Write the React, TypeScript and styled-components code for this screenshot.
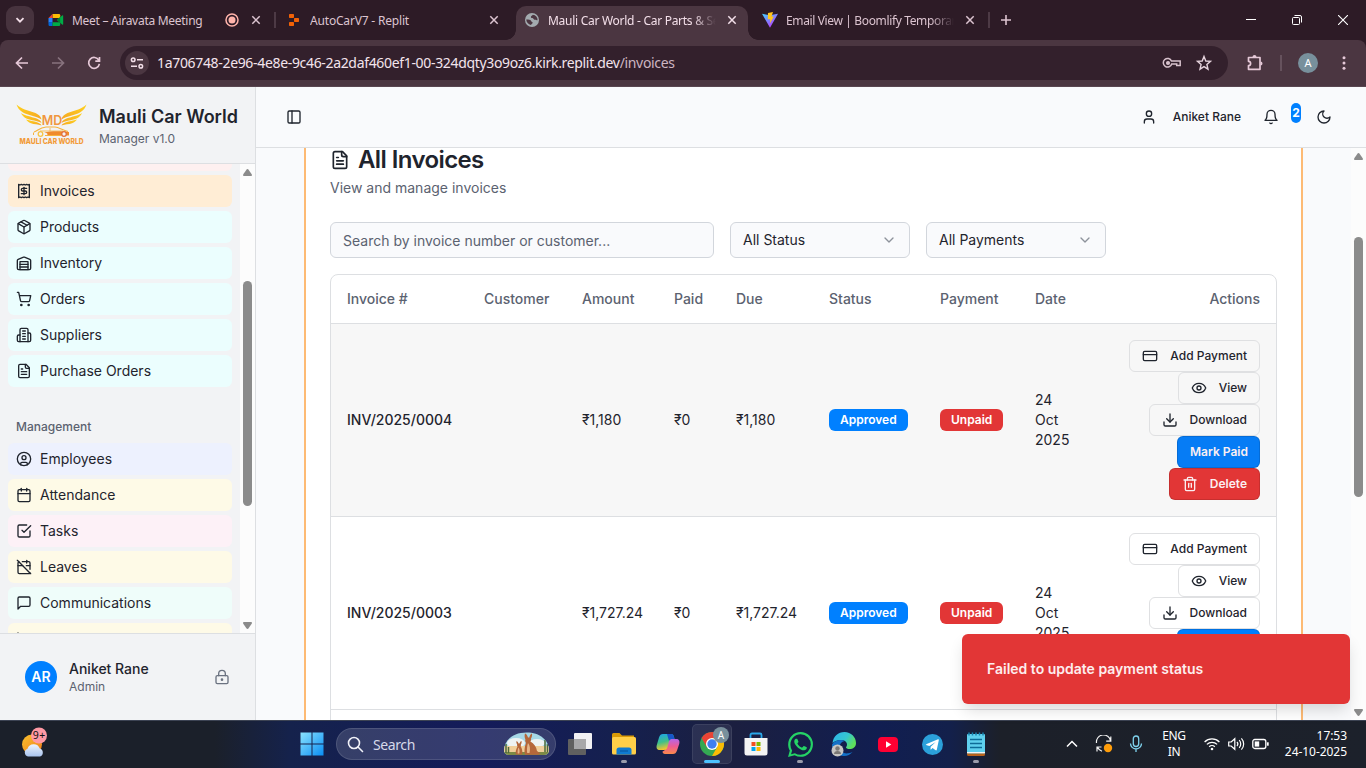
import React from "react";
import styled, { createGlobalStyle, css } from "styled-components";

const ink = "#1f242d";
const muted = "#5b6270";
const line = "#dddfe2";
const blue = "#0080ff";
const red = "#e23636";
const ui = `"Noto Sans", "Open Sans", sans-serif`;

const Global = createGlobalStyle`
  * { box-sizing: border-box; }
  html, body { margin: 0; padding: 0; overflow: hidden; }
  body { font-family: Inter, "Liberation Sans", sans-serif; color: ${ink}; font-size: 14px; }
  svg { display: block; flex: none; }
`;

/* ---------- icons ---------- */
const paths: Record<string, React.ReactNode> = {
  receipt: (<><path d="M4 2v20l2-1 2 1 2-1 2 1 2-1 2 1 2-1 2 1V2l-2 1-2-1-2 1-2-1-2 1-2-1-2 1Z" /><path d="M16 8h-6a2 2 0 1 0 0 4h4a2 2 0 1 1 0 4H8" /><path d="M12 17.5v-11" /></>),
  package: (<><path d="m7.5 4.27 9 5.15" /><path d="M21 8a2 2 0 0 0-1-1.73l-7-4a2 2 0 0 0-2 0l-7 4A2 2 0 0 0 3 8v8a2 2 0 0 0 1 1.73l7 4a2 2 0 0 0 2 0l7-4A2 2 0 0 0 21 16Z" /><path d="m3.3 7 8.7 5 8.7-5" /><path d="M12 22V12" /></>),
  warehouse: (<><path d="M22 8.35V20a2 2 0 0 1-2 2H4a2 2 0 0 1-2-2V8.35A2 2 0 0 1 3.26 6.5l8-3.2a2 2 0 0 1 1.48 0l8 3.2A2 2 0 0 1 22 8.35Z" /><path d="M6 18h12" /><path d="M6 14h12" /><rect width="12" height="12" x="6" y="10" /></>),
  cart: (<><circle cx="8" cy="21" r="1" /><circle cx="19" cy="21" r="1" /><path d="M2.05 2.05h2l2.66 12.42a2 2 0 0 0 2 1.58h9.78a2 2 0 0 0 1.95-1.57l1.65-7.43H5.12" /></>),
  building: (<><path d="M6 22V4a2 2 0 0 1 2-2h8a2 2 0 0 1 2 2v18Z" /><path d="M6 12H4a2 2 0 0 0-2 2v6a2 2 0 0 0 2 2h2" /><path d="M18 9h2a2 2 0 0 1 2 2v9a2 2 0 0 1-2 2h-2" /><path d="M10 6h4" /><path d="M10 10h4" /><path d="M10 14h4" /><path d="M10 18h4" /></>),
  file: (<><path d="M15 2H6a2 2 0 0 0-2 2v16a2 2 0 0 0 2 2h12a2 2 0 0 0 2-2V7Z" /><path d="M14 2v4a2 2 0 0 0 2 2h4" /><path d="M10 9H8" /><path d="M16 13H8" /><path d="M16 17H8" /></>),
  userCircle: (<><circle cx="12" cy="12" r="10" /><circle cx="12" cy="10" r="3" /><path d="M7 20.662V19a2 2 0 0 1 2-2h6a2 2 0 0 1 2 2v1.662" /></>),
  calendar: (<><path d="M8 2v4" /><path d="M16 2v4" /><rect width="18" height="18" x="3" y="4" rx="2" /><path d="M3 10h18" /></>),
  check: (<><path d="m9 11 3 3L22 4" /><path d="M21 12v7a2 2 0 0 1-2 2H5a2 2 0 0 1-2-2V5a2 2 0 0 1 2-2h11" /></>),
  calendarOff: (<><path d="M4.2 4.2A2 2 0 0 0 3 6v14a2 2 0 0 0 2 2h14a2 2 0 0 0 1.82-1.18" /><path d="M21 15.5V6a2 2 0 0 0-2-2H9.5" /><path d="M16 2v4" /><path d="M3 10h7" /><path d="M21 10h-5.5" /><path d="m2 2 20 20" /></>),
  message: <path d="M21 15a2 2 0 0 1-2 2H7l-4 4V5a2 2 0 0 1 2-2h14a2 2 0 0 1 2 2z" />,
  chart: (<><path d="M3 3v18h18" /><path d="M18 17V9" /><path d="M13 17V5" /><path d="M8 17v-3" /></>),
  lock: (<><circle cx="12" cy="16" r="1" /><rect x="3" y="10" width="18" height="12" rx="2" /><path d="M7 10V7a5 5 0 0 1 10 0v3" /></>),
  panel: (<><rect width="18" height="18" x="3" y="3" rx="2" /><path d="M9 3v18" /></>),
  user: (<><path d="M19 21v-2a4 4 0 0 0-4-4H9a4 4 0 0 0-4 4v2" /><circle cx="12" cy="7" r="4" /></>),
  bell: (<><path d="M6 8a6 6 0 0 1 12 0c0 7 3 9 3 9H3s3-2 3-9" /><path d="M10.3 21a1.94 1.94 0 0 0 3.4 0" /></>),
  moon: <path d="M12 3a6 6 0 0 0 9 9 9 9 0 1 1-9-9Z" />,
  chevron: <path d="m6 9 6 6 6-6" />,
  card: (<><rect width="20" height="14" x="2" y="5" rx="2" /><path d="M2 10h20" /></>),
  eye: (<><path d="M2.062 12.348a1 1 0 0 1 0-.696 10.75 10.75 0 0 1 19.876 0 1 1 0 0 1 0 .696 10.75 10.75 0 0 1-19.876 0" /><circle cx="12" cy="12" r="3" /></>),
  download: (<><path d="M21 15v4a2 2 0 0 1-2 2H5a2 2 0 0 1-2-2v-4" /><path d="m7 10 5 5 5-5" /><path d="M12 15V3" /></>),
  trash: (<><path d="M3 6h18" /><path d="M19 6v14c0 1-1 2-2 2H7c-1 0-2-1-2-2V6" /><path d="M8 6V4c0-1 1-2 2-2h4c1 0 2 1 2 2v2" /><path d="M10 11v6" /><path d="M14 11v6" /></>),
};

const Icon = ({ name, size = 16, color = "currentColor" }: { name: string; size?: number; color?: string }) => (
  <svg width={size} height={size} viewBox="0 0 24 24" fill="none" stroke={color} strokeWidth="2" strokeLinecap="round" strokeLinejoin="round">
    {paths[name]}
  </svg>
);

/* ---------- browser window ---------- */
const Screen = styled.div`
  width: 1366px; height: 768px; display: flex; flex-direction: column; overflow: hidden; background: #2d1b26;
`;
const TabStrip = styled.div`
  height: 40px; flex: none; display: flex; padding: 6px 0 0 6px; background: #2d1b26; font-family: ${ui};
`;
const TabSearch = styled.div`
  width: 28px; height: 28px; border-radius: 9px; background: #47333e; margin-right: 6px;
  display: flex; align-items: center; justify-content: center;
`;
const Tab = styled.div<{ $active?: boolean }>`
  position: relative; width: 232px; height: 34px; padding: 0 8px 6px; display: flex; align-items: center; gap: 8px;
  ${(p) => p.$active && css`
    background: #4b3641; border-radius: 10px 10px 0 0;
    &::before, &::after {
      content: ""; position: absolute; bottom: 0; width: 10px; height: 10px;
    }
    &::before { left: -10px; background: radial-gradient(circle at 0 0, transparent 9.5px, #4b3641 10px); }
    &::after { right: -10px; background: radial-gradient(circle at 100% 0, transparent 9.5px, #4b3641 10px); }
  `}
`;
const TabTitle = styled.span<{ $fade?: boolean; $active?: boolean; $track?: number }>`
  flex: 1; min-width: 0; overflow: hidden; white-space: nowrap; font-size: 12px; line-height: 18px; padding-top: 1px;
  letter-spacing: ${(p) => p.$track ?? -0.15}px;
  color: ${(p) => (p.$active ? "#f3dfe9" : "#dcc4d0")};
  ${(p) => p.$fade && css`mask-image: linear-gradient(90deg, #000 86%, transparent 100%);`}
`;
const TabGap = styled.div<{ $bar?: boolean }>`
  width: 6px; height: 28px; display: flex; align-items: center; justify-content: center;
  &::after { content: ""; width: 2px; height: 16px; background: ${(p) => (p.$bar ? "#4d3a45" : "transparent")}; }
`;
const CloseX = ({ c = "#dcc4d0" }: { c?: string }) => (
  <svg width="16" height="16" viewBox="0 0 16 16" stroke={c} strokeWidth="1.5" fill="none"><path d="M4.3 4.3l7.4 7.4M11.7 4.3l-7.4 7.4" /></svg>
);
const NewTab = styled.div`width: 28px; height: 28px; display: flex; align-items: center; justify-content: center;`;
const WindowControls = styled.div`margin-left: auto; display: flex; height: 28px; align-items: center;`;
const WinBtn = styled.div`width: 46px; display: flex; justify-content: center;`;

const ToolbarWrap = styled.div`
  height: 47px; flex: none; display: flex; align-items: center; background: #4b3641; border-radius: 8px 8px 0 0;
  font-family: ${ui}; border-bottom: 1px solid #594650;
`;
const NavBtn = styled.div`width: 36px; display: flex; justify-content: center;`;
const NavGroup = styled.div`display: flex; padding-left: 4px; width: 120px;`;
const AddressBar = styled.div`
  width: 1108px; height: 34px; border-radius: 17px; background: #33202c; display: flex; align-items: center; padding: 0 14px 0 5px;
`;
const SiteInfo = styled.div`
  width: 24px; height: 24px; border-radius: 50%; background: #4b3641; display: flex; align-items: center; justify-content: center; margin-right: 8px;
`;
const Url = styled.div`
  font-size: 14px; line-height: 20px; color: #f3e4ec; letter-spacing: -0.33px; flex: 1; white-space: nowrap;
  span { color: #cdb6c2; }
`;
const BarIcons = styled.div`display: flex; gap: 12px; align-items: center;`;
const ToolRight = styled.div`flex: 1; display: flex; align-items: center; padding-left: 17px;`;
const ToolSep = styled.div`width: 2px; height: 16px; background: #66525d; margin: 0 16px 0 15px;`;
const ChromeAvatar = styled.div`
  width: 20px; height: 20px; border-radius: 50%; background: #78909c; color: #fff; font-size: 11px; line-height: 20px; text-align: center; margin-right: 18px;
`;

/* ---------- app shell ---------- */
const Page = styled.div`height: 633px; flex: none; display: flex; background: #f9fafc;`;
const Sidebar = styled.aside`
  width: 256px; flex: none; background: #f2f3f5; border-right: 1px solid ${line}; display: flex; flex-direction: column;
`;
const Brand = styled.div`
  height: 77px; flex: none; border-bottom: 1px solid ${line}; display: flex; align-items: center; padding: 0 16px; gap: 11px;
`;
const BrandName = styled.div`font-size: 18px; line-height: 24px; font-weight: 600; white-space: nowrap; margin-top: 1px;`;
const BrandSub = styled.div`font-size: 12px; line-height: 16px; color: ${muted}; margin-top: 2px;`;
const NavArea = styled.div`height: 469px; flex: none; display: flex; overflow: hidden;`;
const NavList = styled.nav`width: 240px; height: 469px; overflow: hidden; padding: 0 8px; display: flex; flex-direction: column; gap: 4px;`;
const NavItem = styled.div<{ $bg: string }>`
  height: 32px; flex: none; border-radius: 6px; background: ${(p) => p.$bg}; display: flex; align-items: center; gap: 8px; padding: 0 8px;
  font-size: 14px; line-height: 20px;
`;
const NavTail = styled.div<{ $bg: string }>`height: 7px; flex: none; border-radius: 0 0 6px 6px; background: ${(p) => p.$bg};`;
const GroupLabel = styled.div`
  height: 32px; flex: none; margin: 20px 0 -4px; padding: 0 8px; line-height: 32px; font-size: 12px; font-weight: 500; color: ${muted};
`;
const Profile = styled.div`
  flex: 1; border-top: 1px solid ${line}; display: flex; align-items: center; padding: 0 25px; gap: 12px;
`;
const Initials = styled.div`
  width: 32px; height: 32px; border-radius: 50%; background: ${blue}; color: #fff; font-weight: 600; font-size: 14px; line-height: 32px; text-align: center;
`;
const ProfileText = styled.div`flex: 1;`;
const ProfileName = styled.div`font-size: 14px; line-height: 20px; font-weight: 500;`;
const ProfileRole = styled.div`font-size: 12px; line-height: 16px; color: ${muted};`;

const ScrollTrack = styled.div<{ $w: number }>`
  width: ${(p) => p.$w}px; flex: none; background: #fcfcfc; display: flex; flex-direction: column; align-items: center; padding: 5px 0 4px;
`;
const Thumb = styled.div<{ $top: number; $h: number }>`
  width: 9px; height: ${(p) => p.$h}px; border-radius: 5px; background: #8b8b8b; margin-top: ${(p) => p.$top}px;
`;
const ArrowSvg = styled.svg<{ $down?: boolean }>`
  ${(p) => p.$down && css`margin-top: auto; transform: rotate(180deg);`}
`;
const Arrow = ({ down }: { down?: boolean }) => (
  <ArrowSvg $down={down} width="9" height="7" viewBox="0 0 9 7" fill="#8b8b8b">
    <path d="M4.5 0C5 0 5.3 .3 5.6 .7L8.7 5.2C9.2 6 8.9 7 8 7H1C.1 7-.2 6 .3 5.2L3.4 .7C3.7 .3 4 0 4.5 0Z" />
  </ArrowSvg>
);

const Main = styled.main`flex: 1; display: flex; flex-direction: column; min-width: 0;`;
const TopBar = styled.header`
  height: 61px; flex: none; border-bottom: 1px solid ${line}; display: flex; align-items: center; padding: 0 34px 0 30px;
`;
const TopUser = styled.div`
  margin-left: auto; display: flex; align-items: center; gap: 16px; font-size: 12px; line-height: 16px; font-weight: 500; margin-right: 22px;
`;
const Count = styled.div`
  width: 10px; height: 20px; border-radius: 5px; background: ${blue}; color: #fff; font-size: 12px; font-weight: 700; line-height: 19px; margin: -8px 15px 0 12px;
  display: flex; justify-content: center;
`;
const Body = styled.div`flex: 1; display: flex; min-height: 0; overflow: hidden;`;
const Scroller = styled.div`flex: 1; padding: 0 48px; overflow: hidden;`;
const Card = styled.section`
  height: 100%; overflow: hidden; background: #fff; border: solid #fdba74; border-width: 0 2px; padding: 0 24px; display: flex; flex-direction: column;
`;
const Title = styled.h1`
  margin: 0; height: 24px; display: flex; align-items: center; gap: 8px; font-size: 24px; line-height: 24px; font-weight: 600; letter-spacing: -0.6px;
`;
const Subtitle = styled.p`margin: 6px 0 24px; font-size: 14px; line-height: 20px; color: ${muted};`;
const Filters = styled.div`display: flex; gap: 16px; margin-bottom: 16px;`;
const Field = styled.div<{ $w: number; $hint?: boolean }>`
  width: ${(p) => p.$w}px; height: 36px; border: 1px solid #d2d6dc; border-radius: 6px; background: #f9fafc; display: flex; align-items: center; justify-content: space-between;
  padding: ${(p) => (p.$hint ? "2px 12px 0" : "0 12px")}; font-size: 14px; line-height: 20px; color: ${(p) => (p.$hint ? muted : ink)};
`;
const Table = styled.div`border: 1px solid ${line}; border-radius: 8px; flex: none;`;
const Row = styled.div<{ $h: number; $bg?: string; $head?: boolean }>`
  display: grid; grid-template-columns: 137px 98px 92px 62px 93px 111px 95px 76px 181px; height: ${(p) => p.$h}px; align-items: center;
  background: ${(p) => p.$bg ?? "transparent"}; border-bottom: 1px solid ${line};
  ${(p) => p.$head && css`color: ${muted}; font-weight: 500;`}
`;
const Cell = styled.div<{ $right?: boolean; $strong?: boolean; $narrow?: boolean }>`
  padding: 0 ${(p) => (p.$narrow ? 24 : 16)}px 0 16px; line-height: 20px; font-size: 14px; text-align: ${(p) => (p.$right ? "right" : "left")};
  ${(p) => p.$strong && css`font-weight: 500;`}
`;
const Pill = styled.span<{ $bg: string }>`
  display: block; width: max-content; height: 22px; line-height: 22px; border-radius: 6px; padding: 0 11px; background: ${(p) => p.$bg}; color: #fff; font-size: 12px; font-weight: 600;
`;
const Actions = styled.div`display: flex; flex-direction: column; align-items: flex-end; padding-right: 16px;`;
const ActionBtn = styled.button<{ $w: number; $tone?: string }>`
  width: ${(p) => p.$w}px; height: 32px; border-radius: 6px; border: 1px solid ${(p) => (p.$tone ? "rgba(0,0,0,.12)" : "#dfe0e2")};
  background: ${(p) => p.$tone ?? "transparent"}; color: ${(p) => (p.$tone ? "#fbeff2" : ink)}; white-space: nowrap; line-height: 16px;
  font-family: inherit; font-size: 12px; font-weight: ${(p) => (p.$tone ? 600 : 500)}; display: flex; align-items: center; justify-content: space-between; padding: 0 12px;
`;
const Toast = styled.div`
  position: absolute; left: 962px; top: 634px; width: 388px; height: 70px; border-radius: 6px; background: ${red}; color: #fdeeee;
  font-size: 14px; font-weight: 600; line-height: 70px; padding-left: 25px; box-shadow: 0 8px 16px -3px rgba(0, 0, 0, 0.16);
`;

/* ---------- taskbar ---------- */
const Taskbar = styled.footer`
  height: 48px; flex: none; display: flex; align-items: center; box-shadow: inset 0 1px 0 #3c4353; font-family: ${ui}; color: #fff;
  background: linear-gradient(90deg, #1b202a 0, #1b202a 215px, #15224c 290px, #141b5a 480px, #15204e 620px, #1b1f40 735px, #111e51 880px, #13204b 950px, #1c2029 1000px, #1c212b 1366px);
`;
const WeatherSlot = styled.div`width: 290px; padding-left: 20px; padding-bottom: 2px;`;
const Slot = styled.div<{ $hot?: boolean }>`
  width: ${(p) => (p.$hot ? 40 : 44)}px; margin: 0 ${(p) => (p.$hot ? 2 : 0)}px; height: 40px; display: flex; align-items: center; justify-content: center; position: relative;
  ${(p) => p.$hot && css`background: rgba(255,255,255,.08); border: 1px solid rgba(255,255,255,.08); border-radius: 5px;`}
`;
const StartSlot = styled(Slot)`padding-right: 1px;`;
const Mark = styled.div<{ $on?: boolean }>`
  position: absolute; bottom: ${(p) => (p.$on ? 0 : 1)}px; left: 50%; width: ${(p) => (p.$on ? 16 : 6)}px; height: 3px; border-radius: 2px; transform: translateX(-50%);
  background: ${(p) => (p.$on ? "#4cc2ff" : "#9a9cab")};
`;
const SearchBox = styled.div`
  width: 220px; height: 32px; border-radius: 16px; border: 1px solid rgba(255,255,255,.12); background: rgba(255,255,255,.14); margin: 0 2px; display: flex; align-items: center; padding: 0 5px 0 10px;
  font-size: 14px; color: #d6d9ea; gap: 9px; letter-spacing: -0.4px;
  span { flex: 1; }
`;
const Tray = styled.div`margin-left: auto; display: flex; align-items: center; padding-right: 19px; font-size: 12px; line-height: 16px;`;
const TrayIcon = styled.div<{ $w: number }>`width: ${(p) => p.$w}px; display: flex; justify-content: center;`;
const Lang = styled.div`width: 44px; text-align: center; letter-spacing: -0.3px;`;
const Clock = styled.div`width: 71px; text-align: right; letter-spacing: -0.05px; white-space: nowrap;`;

const LogoSvg = styled.svg`overflow: visible;`;
const BrandLogo = () => (
  <LogoSvg width="72" height="42" viewBox="0 0 72 42">
    <defs>
      <linearGradient id="wing" x1="0" y1="0" x2="1" y2="1"><stop offset="0" stopColor="#ffd21f" /><stop offset="1" stopColor="#f5a623" /></linearGradient>
    </defs>
    {[undefined, "translate(71 0) scale(-1 1)"].map((t, i) => (
      <g key={i} transform={t} fill="url(#wing)">
        <path d="M.5 .5C5 5 12 6.5 18 8.5C22 10 25 12 25.5 15.5C20 12 12 11 7 8.5C3.5 6.5 1.5 3.5 .5 .5Z" />
        <path d="M5 9C9 12 15 12.5 20 14.3C23 15.5 25 17 25.5 19C21 16.5 15 16.5 11 14.8C8 13.5 6 11.5 5 9Z" />
        <path d="M10 15.6C14 17 18 17 21 18.2C23.5 19.2 25 20 25.5 21.6C22 20.3 18 20.4 15 19.3C12.5 18.4 11 17 10 15.6Z" />
      </g>
    ))}
    <text x="36" y="20.5" textAnchor="middle" fontFamily="Inter, sans-serif" fontSize="12.5" fontWeight="600" fill="#f0963f" textLength="20.5" lengthAdjust="spacingAndGlyphs">MD</text>
    <path d="M18 28C22 27 23 23.5 30 23H39C43 23.2 46 26 52 27.5" fill="none" stroke="#f6b23c" strokeWidth="1.1" />
    <path d="M24 27H47M34 24V27" stroke="#f6b23c" strokeWidth=".8" />
    <path d="M28 28.5C36 26.5 46 27 53 28V31.5H29C33 31 32 29 28 28.5Z" fill="#f08a2c" />
    <path d="M17.5 31V28.500M29 31.5H45" stroke="#f6b23c" strokeWidth="1" />
    <circle cx="24.5" cy="30" r="2.3" fill="none" stroke="#f6c445" strokeWidth="1.3" />
    <circle cx="48" cy="30" r="2.3" fill="#f2f3f5" stroke="#e36f3c" strokeWidth="1.3" />
    <text x="3.5" y="39.8" fontFamily="Inter, sans-serif" fontSize="7.6" fontWeight="800" fill="#f29b38" textLength="64" lengthAdjust="spacingAndGlyphs">MAULI CAR WORLD</text>
  </LogoSvg>
);

const InvoiceRow = ({ id, amount, bg }: { id: string; amount: string; bg?: string }) => (
  <Row $h={193} $bg={bg}>
    <Cell $strong>{id}</Cell>
    <Cell />
    <Cell>{amount}</Cell>
    <Cell>₹0</Cell>
    <Cell>{amount}</Cell>
    <Cell><Pill $bg={blue}>Approved</Pill></Cell>
    <Cell><Pill $bg={red}>Unpaid</Pill></Cell>
    <Cell $narrow>24 Oct 2025</Cell>
    <Actions>
      <ActionBtn $w={131}><Icon name="card" />Add Payment</ActionBtn>
      <ActionBtn $w={82}><Icon name="eye" />View</ActionBtn>
      <ActionBtn $w={111}><Icon name="download" />Download</ActionBtn>
      <ActionBtn $w={83} $tone={bg ? "#067cf5" : blue}>Mark Paid</ActionBtn>
      <ActionBtn $w={91} $tone={red}><Icon name="trash" />Delete</ActionBtn>
    </Actions>
  </Row>
);

const navTop = [
  ["receipt", "Invoices", "#ffedd5"], ["package", "Products", "#ebfefe"], ["warehouse", "Inventory", "#ebfefe"],
  ["cart", "Orders", "#ebfefe"], ["building", "Suppliers", "#ebfefe"], ["file", "Purchase Orders", "#ebfefe"],
];
const navManage = [
  ["userCircle", "Employees", "#edf1fe"], ["calendar", "Attendance", "#fefae7"], ["check", "Tasks", "#fdf1f7"],
  ["calendarOff", "Leaves", "#fefae7"], ["message", "Communications", "#effdfa"], ["chart", "", "#fefae7"],
];

export default function App() {
  return (
    <Screen>
      <Global />
      <TabStrip>
        <TabSearch>
          <svg width="12" height="12" viewBox="0 0 12 12" fill="none" stroke="#f3dfe9" strokeWidth="1.8"><path d="M2.5 4.2 6 7.7l3.5-3.5" /></svg>
        </TabSearch>
        <Tab>
          <svg width="16" height="16" viewBox="0 0 16 16">
            <path d="M4.5 2H11a1.2 1.2 0 0 1 1.2 1.2V6H4.5z" fill="#fbbc04" /><path d="M.5 6 4.5 2v4z" fill="#ea4335" />
            <path d="M.5 6h4v4.500h-4z" fill="#2684fc" /><path d="M.5 10.300h4V14H1.700A1.200 1.200 0 0 1 .5 12.800z" fill="#0066da" />
            <path d="M4.5 10.300h7.700v2.500A1.200 1.200 0 0 1 11 14H4.500z" fill="#00ac47" /><path d="M8.800 8l5.400-4.500c.5-.4 1-.2 1 .4v8.200c0 .6-.5.8-1 .4z" fill="#00ac47" /><path d="M8.800 8l3.400-3v6z" fill="#00832d" />
          </svg>
          <TabTitle $track={-0.28}>Meet – Airavata Meeting</TabTitle>
          <svg width="16" height="16" viewBox="0 0 16 16"><circle cx="8" cy="8" r="6" fill="none" stroke="#ffb4ab" strokeWidth="1.5" /><circle cx="8" cy="8" r="3.5" fill="#ffb4ab" /></svg>
          <CloseX />
        </Tab>
        <TabGap $bar />
        <Tab>
          <svg width="16" height="16" viewBox="0 0 16 16" fill="#f26207"><rect x="3" y="2" width="5" height="4" rx=".7" /><rect x="8" y="6" width="5" height="4" rx=".7" /><rect x="3" y="10" width="5" height="4" rx=".7" /></svg>
          <TabTitle $track={-0.18}>AutoCarV7 - Replit</TabTitle>
          <CloseX />
        </Tab>
        <TabGap />
        <Tab $active>
          <svg width="16" height="16" viewBox="0 0 16 16">
            <circle cx="8" cy="8" r="7" fill="#a3abaf" />
            <path d="M2.2 7.600C4.500 7.600 6.800 7.800 7.300 9.200 7.600 10 8.600 9.800 8.700 10.800 8.700 11.800 7.500 11.800 7 12.900 4.300 12.400 2.400 10.300 2.200 7.600Z" fill="#4b3641" />
            <path d="M8.800 2.700C8.600 3.800 6.900 3.600 6.900 4.900 6.900 6.200 8.300 5.600 9 6.300 9.500 7.200 10.200 7.900 11.300 7.800 12.200 7.700 12.600 8.600 13.500 8.300 13.800 5.400 11.700 3 8.800 2.700Z" fill="#4b3641" />
          </svg>
          <TabTitle $active $fade $track={-0.28}>Mauli Car World - Car Parts &amp; Service</TabTitle>
          <CloseX c="#f3dfe9" />
        </Tab>
        <TabGap />
        <Tab>
          <svg width="16" height="16" viewBox="0 0 16 16">
            <defs><linearGradient id="vt" x1="0" x2=".7" y2="1"><stop offset="0" stopColor="#41d1ff" /><stop offset="1" stopColor="#bd34fe" /></linearGradient></defs>
            <path d="M0 1.8 7.5 3.2 16 1.8 8 15.8z" fill="url(#vt)" /><path d="M6 1 11 0 9.5 4.500h2.300L8 11.500l.3-4.300H5.800z" fill="#ffc61c" />
          </svg>
          <TabTitle $fade $track={-0.36}>Email View | Boomlify Temporary Mail</TabTitle>
          <CloseX />
        </Tab>
        <TabGap $bar />
        <NewTab><svg width="12" height="12" viewBox="0 0 12 12" stroke="#dcc4d0" strokeWidth="1.6"><path d="M6 1v10M1 6h10" /></svg></NewTab>
        <WindowControls>
          <WinBtn><svg width="10" height="10" viewBox="0 0 10 10" stroke="#fff"><path d="M0 4.500h10" /></svg></WinBtn>
          <WinBtn><svg width="10" height="10" viewBox="0 0 10 10" fill="none" stroke="#fff"><rect x=".5" y="2.5" width="7" height="7" rx="1" /><path d="M2.5 .5H8A1.5 1.5 0 0 1 9.5 2v5.500" /></svg></WinBtn>
          <WinBtn><svg width="10" height="10" viewBox="0 0 10 10" stroke="#fff" strokeWidth="1.1"><path d="M0 0l10 10M10 0L0 10" /></svg></WinBtn>
        </WindowControls>
      </TabStrip>

      <ToolbarWrap>
        <NavGroup>
          <NavBtn><svg width="16" height="16" viewBox="0 0 16 16" fill="none" stroke="#e6c9d8" strokeWidth="1.7"><path d="M14 8H3M8 2.500 2.500 8 8 13.500" /></svg></NavBtn>
          <NavBtn><svg width="16" height="16" viewBox="0 0 16 16" fill="none" stroke="#88737e" strokeWidth="1.7"><path d="M2 8h11M8 2.500 13.500 8 8 13.500" /></svg></NavBtn>
          <NavBtn><svg width="16" height="16" viewBox="0 0 16 16" fill="none" stroke="#e6c9d8" strokeWidth="1.7"><path d="M12.800 5.200A5.400 5.400 0 1 0 13.400 8.800M13.500 2v4.200H9.300" /></svg></NavBtn>
        </NavGroup>
        <AddressBar>
          <SiteInfo><svg width="14" height="14" viewBox="0 0 14 14" fill="none" stroke="#f3dfe9" strokeWidth="1.5"><circle cx="3.2" cy="3.8" r="1.8" /><path d="M7 3.800h6M1 10.300h6" /><circle cx="10.8" cy="10.3" r="1.8" /></svg></SiteInfo>
          <Url>1a706748-2e96-4e8e-9c46-2a2daf460ef1-00-324dqty3o9oz6.kirk.replit.dev<span>/invoices</span></Url>
          <BarIcons>
            <svg width="20" height="20" viewBox="0 0 20 20" fill="none" stroke="#d8c2cd" strokeWidth="1.5"><path d="M9.500 8H18.200V12.500H14.700V11H9.700A4.300 4.300 0 1 1 9.500 8Z" /><circle cx="6" cy="10" r="1.3" fill="#d8c2cd" /></svg>
            <svg width="20" height="20" viewBox="0 0 20 20" fill="none" stroke="#e6d3dd" strokeWidth="1.4"><path d="M10 3.500l1.800 4.500 4.700.4-3.600 3.100 1.100 4.700-4-2.500-4 2.500 1.100-4.700L3.500 8.400 8.200 8z" /></svg>
          </BarIcons>
        </AddressBar>
        <ToolRight>
          <svg width="20" height="20" viewBox="0 0 20 20"><path d="M3.500 4.500H15v11.800H3.500v-3.800a2.100 2.100 0 0 0 0-4.200z" fill="none" stroke="#e6c9d8" strokeWidth="1.7" strokeLinejoin="round" /><path d="M7.500 4a2 2 0 0 1 4 0zM15.500 8.500a2 2 0 0 1 0 4z" fill="#e6c9d8" /></svg>
          <ToolSep />
          <ChromeAvatar>A</ChromeAvatar>
          <svg width="16" height="16" viewBox="0 0 16 16" fill="#e6c9d8"><circle cx="8" cy="2.7" r="1.5" /><circle cx="8" cy="8" r="1.5" /><circle cx="8" cy="13.3" r="1.5" /></svg>
        </ToolRight>
      </ToolbarWrap>

      <Page>
        <Sidebar>
          <Brand>
            <BrandLogo />
            <div><BrandName>Mauli Car World</BrandName><BrandSub>Manager v1.0</BrandSub></div>
          </Brand>
          <NavArea>
            <NavList>
              <NavTail $bg="#fef0f0" />
              {navTop.map(([i, t, b]) => <NavItem key={t} $bg={b}><Icon name={i} />{t}</NavItem>)}
              <GroupLabel>Management</GroupLabel>
              {navManage.map(([i, t, b]) => <NavItem key={i} $bg={b}><Icon name={i} />{t}</NavItem>)}
            </NavList>
            <ScrollTrack $w={15}><Arrow /><Thumb $top={105} $h={225} /><Arrow down /></ScrollTrack>
          </NavArea>
          <Profile>
            <Initials>AR</Initials>
            <ProfileText><ProfileName>Aniket Rane</ProfileName><ProfileRole>Admin</ProfileRole></ProfileText>
            <Icon name="lock" color="#6b7280" />
          </Profile>
        </Sidebar>
        <Main>
          <TopBar>
            <Icon name="panel" />
            <TopUser><Icon name="user" />Aniket Rane</TopUser>
            <Icon name="bell" />
            <Count>2</Count>
            <Icon name="moon" />
          </TopBar>
          <Body>
            <Scroller>
              <Card>
                <Title><Icon name="file" size={20} />All Invoices</Title>
                <Subtitle>View and manage invoices</Subtitle>
                <Filters>
                  <Field $w={384} $hint>Search by invoice number or customer...</Field>
                  <Field $w={180}>All Status<Icon name="chevron" color="#8d929b" /></Field>
                  <Field $w={180}>All Payments<Icon name="chevron" color="#8d929b" /></Field>
                </Filters>
                <Table>
                  <Row $h={49} $head>
                    {["Invoice #", "Customer", "Amount", "Paid", "Due", "Status", "Payment", "Date"].map((h) => <Cell key={h}>{h}</Cell>)}
                    <Cell $right>Actions</Cell>
                  </Row>
                  <InvoiceRow id="INV/2025/0004" amount="₹1,180" bg="#f7f7f7" />
                  <InvoiceRow id="INV/2025/0003" amount="₹1,727.24" />
                  <Row $h={60} />
                </Table>
              </Card>
            </Scroller>
            <ScrollTrack $w={15}><Arrow /><Thumb $top={77} $h={260} /><Arrow down /></ScrollTrack>
          </Body>
        </Main>
      </Page>

      <Taskbar>
        <WeatherSlot>
          <svg width="30" height="32" viewBox="0 0 30 32">
            <defs><linearGradient id="sun" x2="1" y2="1"><stop offset="0" stopColor="#f9c22e" /><stop offset="1" stopColor="#f07a1a" /></linearGradient><linearGradient id="cl" x2="0" y2="1"><stop offset="0" stopColor="#eef4fd" /><stop offset="1" stopColor="#a9c4ee" /></linearGradient></defs>
            <circle cx="12" cy="17.5" r="10" fill="url(#sun)" />
            <path d="M8 29.500a4 4 0 0 1-.5-7.700 6.500 6.500 0 0 1 12.300-.3A4.200 4.200 0 0 1 20 29.500z" fill="url(#cl)" />
            <circle cx="19" cy="8.5" r="8" fill="#ff99a4" />
            <text x="19" y="12.3" textAnchor="middle" fontSize="10.5" fill="#111" fontFamily={ui} textLength="12.5">9+</text>
          </svg>
        </WeatherSlot>
        <StartSlot>
          <svg width="24" height="24" viewBox="0 0 24 24"><defs><linearGradient id="win" x2="1" y2="1"><stop offset="0" stopColor="#8be3fd" /><stop offset="1" stopColor="#0a8ef5" /></linearGradient></defs><path d="M.5 .5h11v11H.5zM12.500 .5h11v11h-11zM.5 12.500h11v11H.5zM12.500 12.500h11v11h-11z" fill="url(#win)" /></svg>
        </StartSlot>
        <SearchBox>
          <svg width="17" height="17" viewBox="0 0 17 17" fill="none" stroke="#f0f1f8" strokeWidth="1.6"><circle cx="7" cy="7" r="5.5" /><path d="M11 11l4.500 4.500" strokeLinecap="round" /></svg>
          <span>Search</span>
          <svg width="47" height="24" viewBox="0 0 47 24">
            <defs><clipPath id="dome"><path d="M1 19C1 8 10 .5 23.500 .5S46 8 46 19c0 2-2 4-5 4H6c-3 0-5-2-5-4z" /></clipPath></defs>
            <g clipPath="url(#dome)">
              <rect width="47" height="24" fill="#a6d8e6" /><ellipse cx="13" cy="11" rx="9" ry="5" fill="#eef3f3" /><ellipse cx="34" cy="11" rx="8" ry="4" fill="#eef3f3" />
              <rect y="14" width="47" height="6" fill="#f0cf9a" /><rect y="20" width="47" height="4" fill="#7c8a45" /><path d="M3 12v9M5.500 15v6M42 8v12M44.500 12v8" stroke="#4d6b3a" strokeWidth="1.500" />
            </g>
            <path d="M22 1.500c1.500.5 2.500 2.300 3 4h1.300c.3-1.700 1.400-3.500 2.700-4 .4 2-.2 3.800-1 5 .3 1.300-.2 2.500-.6 3 3.600 2 6 5.500 6.600 9.500l3.500 2.500-2 1.300H22c-1-3-.5-8 1-12-.8-.8-1-2-.6-3.200C21.600 5.500 21.300 3.500 22 1.500zM13.500 9c1 .3 1.800 1.500 2 2.500h1c.3-1.200 1-2.200 2-2.500.3 1.500 0 2.500-.6 3.300.1 1 0 1.500-.3 2 1.500 2 2 5 1.700 8.200h-6.500c-.4-3 .3-5.500 1.700-8-.5-.6-.6-1.400-.4-2.200-.7-1-.9-2-.6-3.300z" fill="#b5673a" />
            <path d="M25 11c2 2.500 2.500 6 1.500 10h-2.300c-.5-3-.2-6.500.8-10zM15.500 15.500c1.200 1.500 1.400 4 .8 6h-1.600c-.2-2 0-4.300.8-6z" fill="#e6b78a" />
          </svg>
        </SearchBox>
        <Slot><svg width="26" height="24" viewBox="0 0 26 24"><rect x="7" y="1" width="18" height="16" rx="1" fill="#f1f1f3" /><rect x="1" y="7" width="18" height="16" rx="1" fill="#606060" /><rect x="7" y="7" width="12" height="10" fill="#a8a8aa" /></svg></Slot>
        <Slot>
          <svg width="24" height="22" viewBox="0 0 24 22"><path d="M0 1.500A1.500 1.500 0 0 1 1.500 0h6l2.500 2.500H22v5H0z" fill="#d99a06" /><rect y="4" width="24" height="17.5" rx="1.5" fill="#ffcf48" /><path d="M4.500 21.500V17a2.500 2.500 0 0 1 2.500-2.500h10a2.500 2.500 0 0 1 2.500 2.500v4.500z" fill="#0f7bd0" /><path d="M8 18h8" stroke="#0a5ca8" strokeWidth="1.3" /></svg>
          <Mark />
        </Slot>
        <Slot>
          <svg width="24" height="22" viewBox="0 0 24 22">
            <defs><linearGradient id="cp1" x2="0.3" y2="1"><stop offset="0" stopColor="#1aa4f0" /><stop offset=".55" stopColor="#3fc08a" /><stop offset="1" stopColor="#f7c52d" /></linearGradient><linearGradient id="cp2" x2="0" y2="1"><stop offset="0" stopColor="#b565e8" /><stop offset=".5" stopColor="#ee5c93" /><stop offset="1" stopColor="#fb8a4a" /></linearGradient></defs>
            <path d="M17 21H9c-1.500 0-2.500-1-2.500-2.500 1.600-.3 2.500-1.500 3-3.500l1.500-6c.5-2 1.500-3 3.500-3h5.500c3 0 4 2 3.200 5L21 17.500C20.200 20 19 21 17 21z" fill="url(#cp2)" />
            <path d="M7 1h8c2 0 2.500 1 3 3l.5 2h-2.500c-2 0-2.700 1-3.200 3l-1.300 5c-.5 2-1.500 3-3.500 3H4c-3 0-4-2-3.200-5L3 4.500C3.800 2 5 1 7 1z" fill="url(#cp1)" />
            <path d="M11 1h4c2 0 2.500 1 3 3l.5 2H16c-1.500 0-2.500.5-3 2z" fill="#1755c9" />
          </svg>
        </Slot>
        <Slot $hot>
          <svg width="36" height="36" viewBox="0 0 36 36">
            <circle cx="18" cy="18" r="12" fill="#34a853" />
            <path d="M28.400 12A12 12 0 0 1 18 30l5.200-9L18 12z" fill="#fbbc05" /><path d="M7.600 12A12 12 0 0 1 28.400 12H18L12.800 21z" fill="#ea4335" />
            <circle cx="18" cy="18" r="6" fill="#fff" /><circle cx="18" cy="18" r="4.7" fill="#3f7ff0" />
            <circle cx="27" cy="9" r="8" fill="#78909c" /><text x="27" y="12.5" textAnchor="middle" fontSize="10" fill="#fff" fontFamily={ui}>A</text>
          </svg>
          <Mark $on />
        </Slot>
        <Slot><svg width="24" height="24" viewBox="0 0 24 24"><path d="M6.500 7V3A1.500 1.500 0 0 1 8 1.500h8A1.500 1.500 0 0 1 17.500 3v4" fill="none" stroke="#2aa7e8" strokeWidth="1.8" /><path d="M.5 6h23v15a2.500 2.500 0 0 1-2.500 2.500H3A2.500 2.500 0 0 1 .5 21z" fill="#f4f4f4" /><path d="M7.500 10h4v4h-4z" fill="#f25022" /><path d="M12.500 10h4v4h-4z" fill="#7fba00" /><path d="M7.500 15h4v4h-4z" fill="#00a4ef" /><path d="M12.500 15h4v4h-4z" fill="#ffb900" /></svg></Slot>
        <Slot>
          <svg width="25" height="25" viewBox="0 0 24 24" fill="#25d366"><path d="M17.472 14.382c-.297-.149-1.758-.867-2.030-.967-.273-.099-.471-.148-.67.150-.197.297-.767.966-.940 1.164-.173.199-.347.223-.644.075-.297-.150-1.255-.463-2.390-1.475-.883-.788-1.480-1.761-1.653-2.059-.173-.297-.018-.458.130-.606.134-.133.298-.347.446-.520.149-.174.198-.298.298-.497.099-.198.050-.371-.025-.520-.075-.149-.669-1.612-.916-2.207-.242-.579-.487-.500-.669-.510-.173-.008-.371-.010-.570-.010-.198 0-.520.074-.792.372-.272.297-1.040 1.016-1.040 2.479 0 1.462 1.065 2.875 1.213 3.074.149.198 2.096 3.200 5.077 4.487.709.306 1.262.489 1.694.625.712.227 1.360.195 1.871.118.571-.085 1.758-.719 2.006-1.413.248-.694.248-1.289.173-1.413-.074-.124-.272-.198-.570-.347" /><path d="M12.050 0C5.495 0 .160 5.335.157 11.892c0 2.096.547 4.142 1.588 5.945L.057 24l6.305-1.654a11.882 11.882 0 0 0 5.683 1.448h.005c6.554 0 11.890-5.335 11.893-11.893A11.821 11.821 0 0 0 12.050 0zm0 21.800a9.870 9.870 0 0 1-5.400-1.500l-3.700 1 1-3.600a9.860 9.860 0 0 1-1.600-5.800C2.300 6.400 6.700 2.100 12.050 2.100a9.850 9.850 0 0 1 0 19.700z" /></svg>
          <Mark />
        </Slot>
        <Slot>
          <svg width="26" height="26" viewBox="0 0 26 26">
            <defs><linearGradient id="ed" x2="1" y2=".5"><stop offset="0" stopColor="#2cb4ee" /><stop offset=".6" stopColor="#35c6d0" /><stop offset="1" stopColor="#5fe05a" /></linearGradient></defs>
            <path d="M1.500 12C2.500 5 7 1 13.500 1 20 1 25 6 25 12c0 4-3 6-6.500 6-2 0-3.500-.6-3.500-1.500 0-.6 1-1 1-3C16 11 13.500 9 10 9c-4 0-7 1.500-8.500 3z" fill="url(#ed)" />
            <path d="M1 13.500C2.500 10.500 6 9 10 9c1.500 0 2.700.4 3.700 1-3.200.5-5 3-5 6 0 4 4 7 8.500 6.300 2-.3 3.500-.8 4.500-1.600C19.500 23.500 16.500 25 13 25 6 25 1 19.500 1 13.500z" fill="#1471c8" />
            <circle cx="6.5" cy="19.5" r="6" fill="#c8c6c4" /><circle cx="6.5" cy="17.5" r="2.2" fill="#7b7875" /><path d="M3 23a3.500 3 0 0 1 7 0z" fill="#7b7875" />
          </svg>
        </Slot>
        <Slot><svg width="20" height="15" viewBox="0 0 20 15"><rect width="20" height="15" rx="4" fill="#ff0033" /><path d="M8 4.300 13.300 7.500 8 10.700z" fill="#fff" /></svg></Slot>
        <Slot><svg width="21" height="21" viewBox="0 0 21 21"><circle cx="10.5" cy="10.5" r="10.5" fill="#2ba0da" /><path d="M3.500 10.500 16 5.300c.6-.2 1 .1.800.9l-2 9.600c-.2.7-.6.8-1.200.5l-3-2.300-1.600 1.500c-.3.200-.5.200-.5-.3l.2-2.500 5-4.600-6.300 4-2.700-.9c-.7-.2-.7-.500-.2-.7z" fill="#fff" /></svg></Slot>
        <Slot>
          <svg width="20" height="25" viewBox="0 0 20 25"><rect x="1" y="2" width="18" height="20" rx="1" fill="#5fd0ee" /><path d="M1 20h18v1.500H1z" fill="#f4f4f4" /><path d="M1 21.500h18v1a1.500 1.500 0 0 1-1.500 1.500h-15A1.500 1.500 0 0 1 1 22.500z" fill="#b8621b" /><path d="M3 .5v3M6.500 .5v3M10 .5v3M13.500 .5v3M17 .5v3" stroke="#1784b0" strokeWidth="1.5" /><path d="M4 7.500h12M4 11.500h12M4 15.500h12" stroke="#0e6c98" strokeWidth="1.5" /></svg>
          <Mark />
        </Slot>
        <Tray>
          <TrayIcon $w={32}><svg width="12" height="8" viewBox="0 0 12 8" fill="none" stroke="#fff" strokeWidth="1.5"><path d="M1 6.500l5-5 5 5" /></svg></TrayIcon>
          <TrayIcon $w={32}><svg width="18" height="18" viewBox="0 0 18 18" fill="none" stroke="#f2f2f2" strokeWidth="1.2"><path d="M1.500 8A7 7 0 0 1 15.500 6M15.800 1.500V6.200H11.200M7 16.200A7 7 0 0 1 2.500 12M2 16.500V12h4.500" /><circle cx="13" cy="13" r="4.2" fill="#ff9d0a" stroke="none" /></svg></TrayIcon>
          <TrayIcon $w={32}><svg width="14" height="18" viewBox="0 0 14 18" fill="none" stroke="#7fd3ee" strokeWidth="1.3"><rect x="4.3" y="1" width="5.4" height="10.5" rx="2.7" /><path d="M1.500 8.500a5.500 5.500 0 0 0 11 0M7 14v3" /></svg></TrayIcon>
          <Lang>ENG<br />IN</Lang>
          <TrayIcon $w={32}><svg width="16" height="14" viewBox="0 0 16 14" fill="none" stroke="#fff" strokeWidth="1.3"><path d="M.6 5A10.500 10.500 0 0 1 15.400 5M2.900 7.400a7.200 7.200 0 0 1 10.200 0M5.200 9.700a4 4 0 0 1 5.600 0" /><circle cx="8" cy="12" r="1.3" fill="#fff" stroke="none" /></svg></TrayIcon>
          <TrayIcon $w={16}><svg width="17" height="14" viewBox="0 0 17 14" fill="none" stroke="#fff" strokeWidth="1.2"><path d="M.7 5v4h2.500l3.600 3.300V1.700L3.200 5zM9 5a3 3 0 0 1 0 4M11.200 3.200a5.500 5.500 0 0 1 0 7.600M13.400 1.300a8.300 8.300 0 0 1 0 11.400" /></svg></TrayIcon>
          <TrayIcon $w={32}><svg width="17" height="12" viewBox="0 0 17 12" fill="none" stroke="#fff" strokeWidth="1.3"><rect x=".8" y="1.5" width="13" height="9" rx="2" /><path d="M15.800 4.300v3.400" strokeWidth="1.8" /><rect x="2.7" y="3.4" width="4.5" height="5.2" fill="#fff" stroke="none" /></svg></TrayIcon>
          <Clock>17:53<br />24-10-2025</Clock>
        </Tray>
      </Taskbar>

      <Toast>Failed to update payment status</Toast>
    </Screen>
  );
}
